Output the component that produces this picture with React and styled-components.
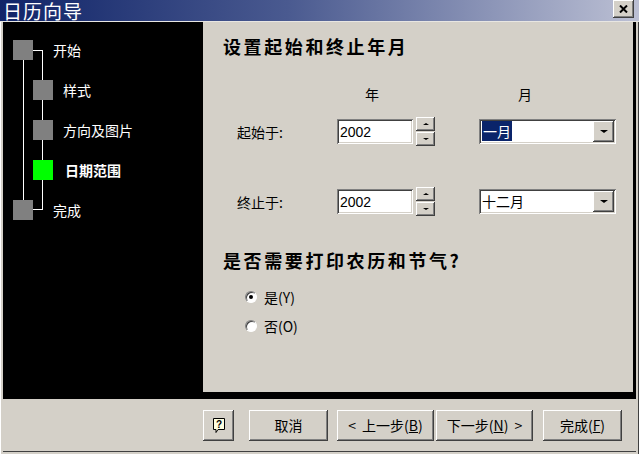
import React from 'react';
import styled, { createGlobalStyle } from 'styled-components';

const GlobalStyle = createGlobalStyle`
  html, body {
    margin: 0;
    padding: 0;
    background: #d4d0c8;
    font-family: "Noto Sans CJK SC", "Liberation Sans", sans-serif;
  }
`

const raised = `
  background: #d4d0c8;
  box-shadow: inset -1px -1px #404040, inset 1px 1px #ffffff,
    inset -2px -2px #808080, inset 2px 2px #d4d0c8;
`

const sunken = `
  box-shadow: inset 1px 1px #808080, inset -1px -1px #ffffff,
    inset 2px 2px #404040, inset -2px -2px #d4d0c8;
`

const Window = styled.div`
  width: 639px;
  height: 454px;
  background: #d4d0c8;
  display: flex;
  flex-direction: column;
  overflow: hidden;
`

const TitleBar = styled.div`
  height: 21px;
  flex: none;
  display: flex;
  justify-content: space-between;
  align-items: center;
  padding: 0 5px 0 3px;
  background: linear-gradient(to right, #102468 0%, #4a5a90 45%, #bcc0d4 100%);
  border-bottom: 1px solid #e8e6e2;
`

const Title = styled.span`
  color: #ffffff;
  font-size: 19px;
  line-height: 21px;
  letter-spacing: 1px;
`

const CloseButton = styled.div`
  ${raised}
  width: 21px;
  height: 18px;
  display: flex;
  align-items: center;
  justify-content: center;
  align-self: flex-start;
`

const Frame = styled.div`
  flex: 1;
  display: flex;
  flex-direction: column;
  padding: 0 3px 2px 3px;
  box-shadow: inset 1px 0 #ffffff, inset -1px 0 #404040;
`

const Body = styled.div`
  height: 377px;
  flex: none;
  display: flex;
  background: #000000;
  padding: 0 3px 7px 0;
  box-sizing: border-box;
`

const SidePanel = styled.div`
  position: relative;
  width: 200px;
  flex: none;
`

const TreeLines = styled.svg`
  position: absolute;
  left: 0;
  top: 0;
`

const StepList = styled.div`
  position: relative;
  display: flex;
  flex-direction: column;
  gap: 20px;
  padding-top: 18px;
`

const Step = styled.div`
  height: 20px;
  display: flex;
  align-items: center;
  padding-left: ${p => (p.$level === 2 ? 30 : 10)}px;
`

const StepBox = styled.div`
  width: 20px;
  height: 20px;
  flex: none;
  background: ${p => (p.$active ? '#00ff00' : '#808080')};
`

const StepLabel = styled.span`
  color: #ffffff;
  font-size: 14px;
  font-weight: ${p => (p.$active ? 700 : 400)};
  margin-left: ${p => p.$gap}px;
  line-height: 20px;
`

const MainPanel = styled.div`
  width: 430px;
  flex: none;
  background: #d4d0c8;
  padding: 14px 0 0 20px;
  box-sizing: border-box;
`

const Heading = styled.h2`
  margin: ${p => p.$top || 0}px 0 0 0;
  font-size: 18px;
  line-height: 20px;
  font-weight: 700;
  letter-spacing: 2.6px;
  color: #000000;
`

const FormRow = styled.div`
  display: grid;
  grid-template-columns: 100px 142px 137px;
  align-items: center;
  height: ${p => p.$height || 29}px;
  margin-top: ${p => p.$top}px;
  margin-left: 14px;
`

const ColumnHead = styled.span`
  font-size: 14px;
  line-height: 16px;
  padding-left: ${p => p.$indent}px;
`

const FieldLabel = styled.span`
  font-size: 14px;
`

const YearGroup = styled.div`
  display: flex;
  align-items: center;
  gap: 3px;
`

const YearInput = styled.div`
  ${sunken}
  width: 76px;
  height: 25px;
  background: #ffffff;
  box-sizing: border-box;
  padding: 0 3px;
  display: flex;
  align-items: center;
  font-family: "Liberation Sans", sans-serif;
  font-size: 14px;
`

const Spinner = styled.div`
  display: flex;
  flex-direction: column;
  width: 19px;
  height: 29px;
  gap: 1px;
`

const SpinButton = styled.div`
  ${raised}
  flex: 1;
  display: flex;
  align-items: center;
  justify-content: center;
`

const Arrow = styled.span`
  width: 0;
  height: 0;
  border-left: ${p => p.$size}px solid transparent;
  border-right: ${p => p.$size}px solid transparent;
  ${p => (p.$up ? 'border-bottom' : 'border-top')}: ${p => p.$size - 1}px solid #000000;
`

const Combo = styled.div`
  ${sunken}
  width: 137px;
  height: 25px;
  background: #ffffff;
  box-sizing: border-box;
  padding: 2px;
  display: flex;
  align-items: center;
`

const ComboText = styled.span`
  flex: 1;
  font-size: 14px;
  line-height: 19px;
  padding-left: 1px;
`

const Selected = styled.span`
  background: #0a246a;
  color: #ffffff;
  padding: 0 1px;
`

const DropButton = styled.div`
  ${raised}
  width: 21px;
  height: 21px;
  display: flex;
  align-items: center;
  justify-content: center;
`

const RadioRow = styled.label`
  display: flex;
  align-items: center;
  gap: 7px;
  height: 18px;
  margin: ${p => p.$top}px 0 0 22px;
  font-size: 14px;
`

const RadioCircle = styled.span`
  width: 12px;
  height: 12px;
  border-radius: 50%;
  background: #ffffff;
  box-sizing: border-box;
  border: 1px solid;
  border-color: #808080 #ffffff #ffffff #808080;
  box-shadow: inset 1px 1px #404040;
  display: flex;
  align-items: center;
  justify-content: center;

  &::after {
    content: '';
    width: 4px;
    height: 4px;
    border-radius: 50%;
    background: ${p => (p.$checked ? '#000000' : 'transparent')};
  }
`

const Footer = styled.div`
  flex: 1;
  display: flex;
  align-items: center;
  justify-content: flex-end;
  padding-right: 14px;
  border-bottom: 1px solid #404040;
`

const Button = styled.div`
  ${raised}
  width: ${p => p.$width}px;
  height: 31px;
  margin-left: ${p => p.$gap || 0}px;
  display: flex;
  align-items: center;
  justify-content: center;
  gap: 6px;
  font-size: 14px;
  color: #000000;
`

const Key = styled.span`
  text-decoration: underline;
`

const steps = [
  { label: '开始', level: 1, gap: 20 },
  { label: '样式', level: 2, gap: 10 },
  { label: '方向及图片', level: 2, gap: 10 },
  { label: '日期范围', level: 2, gap: 12, active: true },
  { label: '完成', level: 1, gap: 20 },
]

function HelpIcon() {
  return (
    <svg width="14" height="17" viewBox="0 0 14 17">
      <path d="M1.5 1.5h11v11H6l-2 3v-3H1.5z" fill="#ffffe1" stroke="#000" strokeWidth="1" />
      <text x="7" y="11" textAnchor="middle" fontSize="10" fontWeight="700" fontFamily="Liberation Sans, sans-serif" fill="#000">?</text>
    </svg>
  )
}

export default function App() {
  return (
    <Window>
      <GlobalStyle />
      <TitleBar>
        <Title>日历向导</Title>
        <CloseButton>
          <svg width="9" height="8" viewBox="0 0 9 8">
            <path d="M1 0.5l7 7M8 0.5l-7 7" stroke="#000" strokeWidth="2" />
          </svg>
        </CloseButton>
      </TitleBar>
      <Frame>
        <Body>
          <SidePanel>
            <TreeLines width="200" height="200">
              <path d="M20.5 38V178" stroke="#fff" strokeWidth="1" />
              <path d="M39.5 28V188M30 28.5h10M30 187.5h10" stroke="#fff" strokeWidth="1" />
            </TreeLines>
            <StepList>
              {steps.map(s => (
                <Step key={s.label} $level={s.level}>
                  <StepBox $active={s.active} />
                  <StepLabel $gap={s.gap} $active={s.active}>{s.label}</StepLabel>
                </Step>
              ))}
            </StepList>
          </SidePanel>
          <MainPanel>
            <Heading>设置起始和终止年月</Heading>
            <FormRow $top={30} $height={16}>
              <span />
              <ColumnHead $indent={28}>年</ColumnHead>
              <ColumnHead $indent={39}>月</ColumnHead>
            </FormRow>
            <FormRow $top={15}>
              <FieldLabel>起始于:</FieldLabel>
              <YearGroup>
                <YearInput>2002</YearInput>
                <Spinner>
                  <SpinButton><Arrow $up $size={3} /></SpinButton>
                  <SpinButton><Arrow $size={3} /></SpinButton>
                </Spinner>
              </YearGroup>
              <Combo>
                <ComboText><Selected>一月</Selected></ComboText>
                <DropButton><Arrow $size={4} /></DropButton>
              </Combo>
            </FormRow>
            <FormRow $top={41}>
              <FieldLabel>终止于:</FieldLabel>
              <YearGroup>
                <YearInput>2002</YearInput>
                <Spinner>
                  <SpinButton><Arrow $up $size={3} /></SpinButton>
                  <SpinButton><Arrow $size={3} /></SpinButton>
                </Spinner>
              </YearGroup>
              <Combo>
                <ComboText>十二月</ComboText>
                <DropButton><Arrow $size={4} /></DropButton>
              </Combo>
            </FormRow>
            <Heading $top={34}>是否需要打印农历和节气?</Heading>
            <RadioRow $top={18}>
              <RadioCircle $checked />
              <span>是(Y)</span>
            </RadioRow>
            <RadioRow $top={11}>
              <RadioCircle />
              <span>否(O)</span>
            </RadioRow>
          </MainPanel>
        </Body>
        <Footer>
          <Button $width={31}><HelpIcon /></Button>
          <Button $width={79} $gap={15}>取消</Button>
          <Button $width={97} $gap={9}><span>&lt;</span><span>上一步(<Key>B</Key>)</span></Button>
          <Button $width={97} $gap={2}><span>下一步(<Key>N</Key>)</span><span>&gt;</span></Button>
          <Button $width={79} $gap={10}><span>完成(<Key>F</Key>)</span></Button>
        </Footer>
      </Frame>
    </Window>
  );
}
